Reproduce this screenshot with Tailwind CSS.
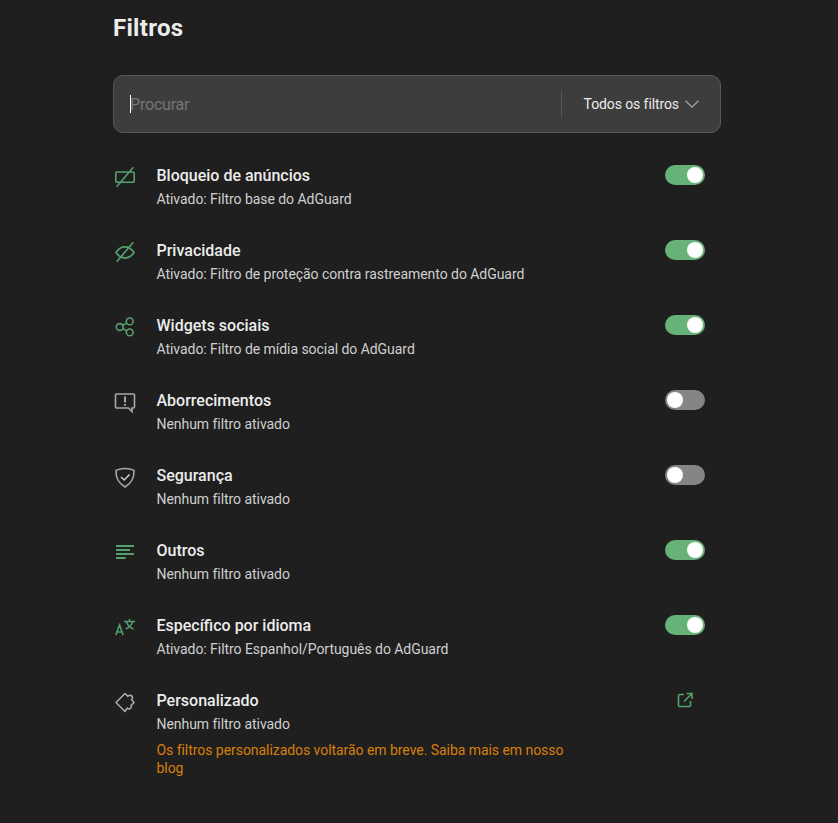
<!DOCTYPE html>
<html lang="pt">
<head>
    <meta charset="UTF-8">
    <title>Filtros</title>
    <script src="https://cdn.jsdelivr.net/npm/@tailwindcss/browser@4"></script>
</head>
<body class="bg-[#1f1f1f] font-['Roboto',sans-serif] h-[823px] overflow-hidden">
    <div class="w-[608px] ml-[113px] pt-3">
        <h1 class="text-2xl leading-8 font-bold tracking-[0.3px] text-[#ececec] mb-[31px]">Filtros</h1>

        <div class="h-[58px] flex items-center bg-[#3d3d3d] border border-[#565656] rounded-[10px] pl-4 pr-[21px] mb-[30px]">
            <div class="w-px h-[18px] bg-white"></div>
            <div class="flex-1 text-base tracking-[-0.2px] text-[#757575] -ml-px pt-[2px]">Procurar</div>
            <div class="w-px h-[26px] bg-[#565656] mr-[22px]"></div>
            <div class="text-sm tracking-[-0.1px] text-[#ececec]">Todos os filtros</div>
            <svg class="ml-[6px]" width="14" height="8" viewBox="0 0 14 8" fill="none" stroke="#a0a0a0" stroke-width="1.3"><path d="M.5.8 7 7 13.500.8"/></svg>
        </div>

        <!-- linhas de filtro -->
        <div class="flex mb-[29px]">
            <svg class="mt-[2px] mr-[19.5px] shrink-0" width="24" height="24" viewBox="0 0 24 24" fill="none" stroke="#55a06e" stroke-width="1.600"><rect x="2.800" y="7" width="18.400" height="10.300" rx="1"/><path d="M20.300 2.300 3.700 21.700"/></svg>
            <div class="flex-1">
                <div class="text-base leading-[26px] font-medium text-[#ececec]">Bloqueio de anúncios</div>
                <div class="text-sm leading-5 tracking-[-0.05px] text-[#cfcfcf]">Ativado: Filtro base do AdGuard</div>
            </div>
            <div class="w-10 h-5 mr-4 mt-[2px] rounded-full bg-[#67b279] flex items-center justify-end px-[2px]"><div class="w-4 h-4 rounded-full bg-white"></div></div>
        </div>

        <div class="flex mb-[29px]">
            <svg class="mt-[2px] mr-[19.5px] shrink-0" width="24" height="24" viewBox="0 0 24 24" fill="none" stroke="#55a06e" stroke-width="1.600"><path d="M3 12.500c5-7.500 13-7.500 18 0-5 7.500-13 7.500-18 0Z"/><path d="M20.300 2.300 3.700 21.700"/></svg>
            <div class="flex-1">
                <div class="text-base leading-[26px] font-medium text-[#ececec]">Privacidade</div>
                <div class="text-sm leading-5 tracking-[-0.05px] text-[#cfcfcf]">Ativado: Filtro de proteção contra rastreamento do AdGuard</div>
            </div>
            <div class="w-10 h-5 mr-4 mt-[2px] rounded-full bg-[#67b279] flex items-center justify-end px-[2px]"><div class="w-4 h-4 rounded-full bg-white"></div></div>
        </div>

        <div class="flex mb-[29px]">
            <svg class="mt-[2px] mr-[19.5px] shrink-0" width="24" height="24" viewBox="0 0 24 24" fill="none" stroke="#55a06e" stroke-width="1.600"><circle cx="6.700" cy="12" r="3.400"/><circle cx="16.700" cy="6.400" r="3.400"/><circle cx="16.700" cy="17.400" r="3.400"/><path d="m9.700 10.300 4-2.200M9.700 13.800l4 1.900"/></svg>
            <div class="flex-1">
                <div class="text-base leading-[26px] font-medium text-[#ececec]">Widgets sociais</div>
                <div class="text-sm leading-5 tracking-[-0.05px] text-[#cfcfcf]">Ativado: Filtro de mídia social do AdGuard</div>
            </div>
            <div class="w-10 h-5 mr-4 mt-[2px] rounded-full bg-[#67b279] flex items-center justify-end px-[2px]"><div class="w-4 h-4 rounded-full bg-white"></div></div>
        </div>

        <div class="flex mb-[29px]">
            <svg class="mt-[2px] mr-[19.5px] shrink-0" width="24" height="24" viewBox="0 0 24 24" fill="none" stroke="#a8a8a8" stroke-width="1.600"><path d="M3.500 4h17a1 1 0 0 1 1 1v12a1 1 0 0 1-1 1H19v3.500L15.500 18h-12a1 1 0 0 1-1-1V5a1 1 0 0 1 1-1Z"/><path d="M12 6.500v6M12 14v1.800" stroke="#c8c8c8"/></svg>
            <div class="flex-1">
                <div class="text-base leading-[26px] font-medium text-[#ececec]">Aborrecimentos</div>
                <div class="text-sm leading-5 tracking-[-0.05px] text-[#cfcfcf]">Nenhum filtro ativado</div>
            </div>
            <div class="w-10 h-5 mr-4 mt-[2px] rounded-full bg-[#858585] flex items-center justify-start px-[2px]"><div class="w-4 h-4 rounded-full bg-white"></div></div>
        </div>

        <div class="flex mb-[29px]">
            <svg class="mt-[2px] mr-[19.5px] shrink-0" width="24" height="24" viewBox="0 0 24 24" fill="none" stroke="#a8a8a8" stroke-width="1.600"><path d="M12 3.500c3 0 6.500.7 9 1.900.3 7-2 12.600-9 16.600-7-4-9.300-9.600-9-16.600 2.500-1.200 6-1.900 9-1.900Z"/><path d="m8 12 3.200 3 5.300-5.500" stroke="#c8c8c8"/></svg>
            <div class="flex-1">
                <div class="text-base leading-[26px] font-medium text-[#ececec]">Segurança</div>
                <div class="text-sm leading-5 tracking-[-0.05px] text-[#cfcfcf]">Nenhum filtro ativado</div>
            </div>
            <div class="w-10 h-5 mr-4 mt-[2px] rounded-full bg-[#858585] flex items-center justify-start px-[2px]"><div class="w-4 h-4 rounded-full bg-white"></div></div>
        </div>

        <div class="flex mb-[29px]">
            <svg class="mt-[2px] mr-[19.5px] shrink-0" width="24" height="24" viewBox="0 0 24 24" fill="none" stroke="#55a06e" stroke-width="1.800"><path d="M3 6h18M3 10h14M3 14h18M3 18h9.600"/></svg>
            <div class="flex-1">
                <div class="text-base leading-[26px] font-medium text-[#ececec]">Outros</div>
                <div class="text-sm leading-5 tracking-[-0.05px] text-[#cfcfcf]">Nenhum filtro ativado</div>
            </div>
            <div class="w-10 h-5 mr-4 mt-[2px] rounded-full bg-[#67b279] flex items-center justify-end px-[2px]"><div class="w-4 h-4 rounded-full bg-white"></div></div>
        </div>

        <div class="flex mb-[29px]">
            <svg class="mt-[2px] mr-[19.5px] shrink-0" width="24" height="24" viewBox="0 0 24 24" fill="none" stroke="#55a06e" stroke-width="1.600"><path d="m2.800 20 3.700-10 3.700 10M4.200 17h4.600"/><path d="M11 6.500h11M16.500 3.800v2.700M13.300 6.500c1 3.500 3.500 6 7 7.500M19.700 6.500c-1 3.500-3.500 6-7 7.500" stroke-width="1.400"/></svg>
            <div class="flex-1">
                <div class="text-base leading-[26px] font-medium text-[#ececec]">Específico por idioma</div>
                <div class="text-sm leading-5 tracking-[-0.05px] text-[#cfcfcf]">Ativado: Filtro Espanhol/Português do AdGuard</div>
            </div>
            <div class="w-10 h-5 mr-4 mt-[2px] rounded-full bg-[#67b279] flex items-center justify-end px-[2px]"><div class="w-4 h-4 rounded-full bg-white"></div></div>
        </div>

        <div class="flex">
            <svg class="mt-[2px] mr-[19.5px] shrink-0" width="24" height="24" viewBox="0 0 24 24" fill="none" stroke="#a8a8a8" stroke-width="1.600" stroke-linejoin="round"><path d="M3 12.500 12 3.500l3 2.800c.5-1.500 4.500-1.500 4.500 1.500 0 1-.5 1.500-1 1.800L21 12.500l-3 3c1 1.500-.5 4-3 3.200l-.8-.7L12 21.500Z"/></svg>
            <div class="w-[420px]">
                <div class="text-base leading-[26px] font-medium text-[#ececec]">Personalizado</div>
                <div class="text-sm leading-5 tracking-[-0.05px] text-[#cfcfcf]">Nenhum filtro ativado</div>
                <div class="text-sm leading-[18px] tracking-[-0.05px] text-[#d97f0a] mt-[7px]">Os filtros personalizados voltarão em breve. Saiba mais em nosso blog</div>
            </div>
            <div class="flex-1 flex justify-end">
                <svg class="mr-[27px] mt-[3px]" width="18" height="18" viewBox="0 0 18 18" fill="none" stroke="#55a06e" stroke-width="1.600"><path d="M8 3.500H3.500a1 1 0 0 0-1 1v10a1 1 0 0 0 1 1h10a1 1 0 0 0 1-1V10"/><path d="M8 10.500 15.500 3M10.500 2.500h5.500V8"/></svg>
            </div>
        </div>
    </div>
</body>
</html>
